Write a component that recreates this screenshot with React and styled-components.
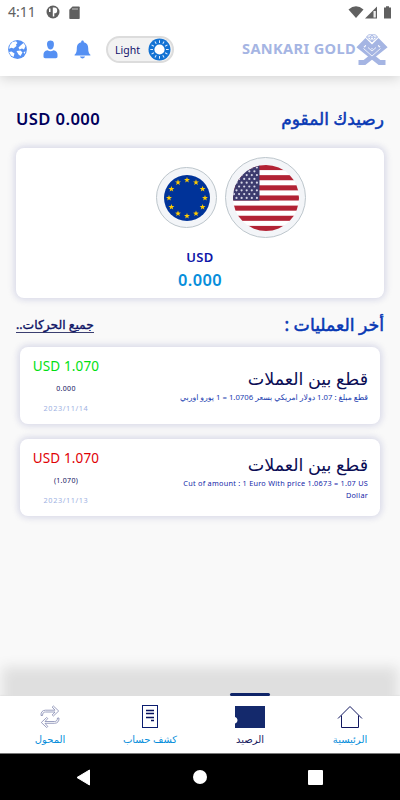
import React from 'react';
import styled, { createGlobalStyle } from 'styled-components';

const GlobalStyle = createGlobalStyle`
  * {
    box-sizing: border-box;
  }

  body {
    margin: 0;
    background: #f9f9f9;
    font-family: 'Noto Sans', 'DejaVu Sans', sans-serif;
  }

  svg {
    display: block;
    flex-shrink: 0;
  }
`;

const Screen = styled.div`
  display: flex;
  flex-direction: column;
  width: 400px;
  height: 800px;
  overflow: hidden;
  background: #f9f9f9;
`;

const Text = styled.span`
  display: block;
  color: ${({ $color }) => $color};
  font-size: ${({ $size }) => $size}px;
  font-weight: ${({ $weight }) => $weight || 400};
  line-height: ${({ $line }) => $line || 20}px;
  letter-spacing: ${({ $spacing }) => ($spacing ? `${$spacing}px` : 'normal')};
  -webkit-text-stroke: ${({ $stroke }) => $stroke || 0}px currentColor;
  white-space: nowrap;
`;

const Link = styled(Text)`
  border-bottom: 1px solid #3b3f70;
`;

const Top = styled.header`
  height: 76px;
  flex-shrink: 0;
  background: #fff;
  box-shadow: 0 2px 12px rgba(0, 0, 0, 0.16);
`;

const StatusBar = styled.div`
  display: flex;
  align-items: center;
  height: 24px;
  padding: 0 8px;
`;

const StatusIcons = styled.div`
  display: flex;
  align-items: center;
  gap: 9px;
  margin-left: 10px;
`;

const Signals = styled.div`
  display: flex;
  align-items: center;
  margin-left: auto;
`;

const Toolbar = styled.div`
  display: flex;
  align-items: center;
  height: 51px;
  padding: 0 12px 0 8px;
`;

const Actions = styled.div`
  display: flex;
  align-items: center;
  gap: 16px;
`;

const ThemeSwitch = styled.div`
  display: flex;
  align-items: center;
  justify-content: space-between;
  width: 68px;
  height: 27px;
  margin-left: 15px;
  padding: 0 1px 0 7px;
  border: 2px solid #dcdcdc;
  border-radius: 14px;
  background: #f2f2f2;
`;

const Brand = styled.div`
  display: flex;
  align-items: center;
  margin-left: auto;
`;

const BrandName = styled(Text)`
  padding-bottom: 3px;
`;

const Content = styled.main`
  flex: 1;
  padding: 32px 16px 0;
`;

const Heading = styled.div`
  display: flex;
  align-items: center;
  justify-content: space-between;
  height: ${({ $height }) => $height}px;
  padding-top: ${({ $top }) => $top || 0}px;
`;

const BalanceCard = styled.section`
  display: flex;
  flex-direction: column;
  align-items: center;
  height: 150px;
  margin-top: 18px;
  padding-top: 9px;
  border-radius: 8px;
  background: #fff;
  box-shadow: 0 0 6px 2px rgba(198, 200, 222, 0.65);
`;

const Currencies = styled.div`
  display: flex;
  align-items: center;
  gap: 8px;
  margin-left: 62px;
  margin-bottom: 9px;
`;

const CurrencyRing = styled.div`
  display: flex;
  align-items: center;
  justify-content: center;
  width: ${({ $size }) => $size}px;
  height: ${({ $size }) => $size}px;
  border: 1px solid #bdc6cc;
  border-radius: 50%;
  background: #f3f5f8;
`;

const OperationCard = styled.article`
  display: flex;
  justify-content: space-between;
  height: 77px;
  margin: 0 4px 15px;
  padding: 0 12px;
  border-radius: 8px;
  background: #fff;
  box-shadow: 0 0 6px 2px rgba(198, 200, 222, 0.65);
`;

const Amounts = styled.div`
  display: flex;
  flex-direction: column;
  align-items: center;
  width: 68px;
  padding-top: 9px;
`;

const Details = styled.div`
  display: flex;
  flex-direction: column;
  align-items: flex-end;
  padding-top: ${({ $top }) => $top}px;
`;

const Navigation = styled.nav`
  display: grid;
  grid-template-columns: repeat(4, 1fr);
  height: 57px;
  flex-shrink: 0;
  background: #fff;
  box-shadow: 0 -31px 12px -2px #dfdfdf, 0 0 2px rgba(0, 0, 0, 0.2);
`;

const Tab = styled.div`
  position: relative;
  display: flex;
  flex-direction: column;
  align-items: center;
  padding-top: 8px;
`;

const ActiveBar = styled.div`
  position: absolute;
  top: -3px;
  left: 30px;
  width: 40px;
  height: 3px;
  border-radius: 2px;
  background: #0e2468;
`;

const TabIcon = styled.div`
  display: flex;
  align-items: center;
  height: 26px;
`;

const SystemBar = styled.div`
  display: flex;
  align-items: center;
  justify-content: space-between;
  height: 47px;
  flex-shrink: 0;
  padding: 0 77px 0 76px;
  border-top: 1px solid #777;
  background: #000;
`;

const blue = '#5590f3';

const GlobeIcon = () => (
  <svg width="19" height="19" viewBox="0 0 19 19">
    <circle cx="9.5" cy="9.5" r="9.4" fill={blue} />
    <path d="M4.5 2 8 1.3 9.5 3 8 4.5 8.5 6 5.5 8.5 3.5 7.8 1 8.8 2 5zM12.5 5.5l3-2.5 2 3-1.5 3.5-2-1-2.5 1-1-2zM1 12l2.5-.5 3 2L5.5 17 3 15.5zM8.5 11l4-.5 2 2-2 3.5-2-1.5zM15.5 12l2-.5-1 2.5z" fill="#fff" />
  </svg>
);

const PersonIcon = () => (
  <svg width="15" height="19" viewBox="0 0 15 19">
    <path d="M7.5.5C4 .5 3.8 3.5 4.2 5.7 4.6 8 5.7 9.4 7.5 9.4s2.9-1.4 3.3-3.7c.4-2.2.2-5.2-3.3-5.2zM.5 14.5c0-2.2 1.3-3.7 4-4.3 2 1.3 4 1.3 6 0 2.7.6 4 2.1 4 4.3v2c0 1-.7 1.7-1.7 1.7H2.2c-1 0-1.7-.7-1.7-1.7z" fill={blue} />
  </svg>
);

const BellIcon = () => (
  <svg width="17" height="19" viewBox="0 0 17 19">
    <path d="M7.2 1.6C7.2 0 9.8 0 9.8 1.6v.7c3 .7 4.4 2.8 4.4 5.7 0 4 .6 5.4 2.2 6.7v.8H.6v-.8C2.2 13.4 2.8 12 2.8 8c0-2.9 1.4-5 4.4-5.7zM6 16.6h5c-.3 2.4-4.7 2.4-5 0z" fill={blue} />
  </svg>
);

const SunIcon = () => (
  <svg width="23" height="23" viewBox="0 0 23 23">
    <circle cx="11.5" cy="11.5" r="11" fill="#1272d3" />
    <circle cx="11.5" cy="11.5" r="5.1" fill="#fff" />
    {Array.from({ length: 12 }, (_, i) => (
      <path key={i} d="M11.5 5V2.3" stroke="#e3efff" strokeWidth="1" transform={`rotate(${i * 30} 11.5 11.5)`} />
    ))}
  </svg>
);

const BrandLogo = () => (
  <svg width="32" height="32" viewBox="0 0 32 32" fill="none">
    <g stroke="#a5b5e3" strokeWidth="4.8">
      <path d="M16 14 9.5 7.5 4 13 23.5 28.5H29.5" />
      <path d="M16 14 22.5 7.5 28 13 8.5 28.5H2.5" />
    </g>
    <path d="m16 22-8-7 2.500-4 5.500 4.500 5.500-4.500 2.500 4z" fill="#a5b5e3" />
    <path d="M7.500 14.500 16 22l8.500-7.500M12 13.500l4 3.500 4-3.500" stroke="#fff" strokeWidth=".8" />
    <path d="M12.500.8h7l2 2.400L16 8l-5.500-4.800zM10.500 3.200h11M14 3.200l2 4.500 2-4.500L16 1z" stroke="#a5b5e3" strokeWidth=".9" fill="#fff" />
  </svg>
);

const star = (cx, cy, r) =>
  Array.from({ length: 10 }, (_, i) => {
    const angle = (i * Math.PI) / 5 - Math.PI / 2;
    const radius = i % 2 ? r * 0.4 : r;
    return `${cx + radius * Math.cos(angle)},${cy + radius * Math.sin(angle)}`;
  }).join(' ');

const EuroFlag = () => (
  <svg width="46" height="46" viewBox="0 0 46 46">
    <circle cx="23" cy="23" r="23" fill="#003399" />
    {Array.from({ length: 12 }, (_, i) => {
      const angle = (i * Math.PI) / 6;
      return <polygon key={i} points={star(23 + 18 * Math.sin(angle), 23 - 18 * Math.cos(angle), 3.1)} fill="#ffcc00" />;
    })}
  </svg>
);

const UsaFlag = () => (
  <svg width="66" height="66" viewBox="0 0 66 66">
    <clipPath id="usa">
      <circle cx="33" cy="33" r="33" />
    </clipPath>
    <g clipPath="url(#usa)">
      <rect width="66" height="66" fill="#fff" />
      {Array.from({ length: 7 }, (_, i) => (
        <rect key={i} y={i * 10.15} width="66" height="5.08" fill="#b22234" />
      ))}
      <rect width="26.5" height="35.5" fill="#3c3b6e" />
      {Array.from({ length: 9 }, (_, row) =>
        Array.from({ length: 5 }, (_, col) => (
          <circle key={`${row}-${col}`} cx={(row % 2 ? 1 : 3.5) + col * 5.1} cy={2.5 + row * 3.8} r="1.1" fill="#d5d5e6" />
        ))
      )}
    </g>
  </svg>
);

const TransferIcon = () => (
  <svg width="20" height="24" viewBox="0 0 20 24" fill="none" stroke="#8288b0" strokeWidth=".8">
    <path d="M1 10.5C.7 7.3 2.5 5.2 5.5 5.2H15L12.2 2l1.2-1L18.7 6l-5.3 5-1.2-1L15 7H5.5C3.5 7 2.7 8 2.5 10.5zM19 13c.3 3.2-1.5 5.3-4.5 5.3H5l2.8 3.2-1.2 1L1.3 17.5l5.3-5 1.2 1L5 16.5h9.5c2 0 2.8-1 3-3.5z" />
  </svg>
);

const StatementIcon = () => (
  <svg width="16" height="24" viewBox="0 0 16 24">
    <rect x=".5" y=".5" width="15" height="22" fill="#fff" stroke="#0b1d70" strokeWidth="1" />
    <path d="M4 5.5h8M4 8.5h8M4 12.5h8M9 15.5h3" stroke="#07115e" strokeWidth="1.3" />
  </svg>
);

const WalletIcon = () => (
  <svg width="30" height="22" viewBox="0 0 30 22">
    <path d="M0 0h30v22H0v-4.5c3.3-1 3.3-5.500 0-6.500z" fill="#14296c" />
  </svg>
);

const HomeIcon = () => (
  <svg width="26" height="24" viewBox="0 0 26 24" fill="none" stroke="#11175f" strokeWidth="1">
    <path d="M1 13.5 13 1.5l12 12M4.500 10.500v12h17v-12" />
  </svg>
);

const tabs = [
  { label: 'المحول', icon: TransferIcon },
  { label: 'كشف حساب', icon: StatementIcon },
  { label: 'الرصيد', icon: WalletIcon, active: true },
  { label: 'الرئيسية', icon: HomeIcon },
];

const Header = () => (
  <Top>
    <StatusBar>
      <Text $size={14} $line={22} $color="#606060">4:11</Text>
      <StatusIcons>
        <svg width="14" height="14" viewBox="0 0 14 14">
          <circle cx="7" cy="7" r="6.5" fill="#606060" />
          <path d="M6.8 2.5h1.5a2.8 2.8 0 0 1 0 5.8v3.2H6.8zM3 3.5h1.5v3.5H3z" fill="#fff" />
        </svg>
        <svg width="11" height="13" viewBox="0 0 11 13">
          <path d="M3.5.5H10q.7 0 .7.7v11q0 .7-.7.7H1q-.7 0-.7-.7V3.7z" fill="#606060" />
          <path d="M4 2v2M6 2v2M8 2v2" stroke="#ddd" strokeWidth=".8" />
        </svg>
      </StatusIcons>
      <Signals>
        <svg width="44" height="14" viewBox="0 0 44 14">
          <path d="M.5 4.5Q8-2 15.5 4.5L8 13z" fill="#606060" />
          <path d="M17 13.5 29 1.500v12z" fill="#606060" />
          <path d="M25.5 6h2.3v6.500h-2.300z" fill="#eee" />
          <path d="M36 2.5h2V1.300h3v1.200h2v11h-7z" fill="#606060" />
        </svg>
      </Signals>
    </StatusBar>
    <Toolbar>
      <Actions>
        <GlobeIcon />
        <PersonIcon />
        <BellIcon />
      </Actions>
      <ThemeSwitch>
        <Text $size={10.5} $line={22} $color="#10106b">Light</Text>
        <SunIcon />
      </ThemeSwitch>
      <Brand>
        <BrandName $size={14.6} $weight={700} $line={16} $spacing={0.35} $color="#a5b5e3">SANKARI GOLD</BrandName>
        <BrandLogo />
      </Brand>
    </Toolbar>
  </Top>
);

const App = () => (
  <>
    <GlobalStyle />
    <Screen>
      <Header />
      <Content>
        <Heading $height={22}>
          <Text $size={16.6} $weight={600} $spacing={0.4} $color="#00005c">USD 0.000</Text>
          <Text dir="rtl" $size={17} $stroke={0.5} $color="#0838b4">رصيدك المقوم</Text>
        </Heading>
        <BalanceCard>
          <Currencies>
            <CurrencyRing $size={61}><EuroFlag /></CurrencyRing>
            <CurrencyRing $size={81}><UsaFlag /></CurrencyRing>
          </Currencies>
          <Text $size={13} $weight={600} $spacing={0.4} $color="#0d16a8">USD</Text>
          <Text $size={16.4} $weight={600} $line={26} $spacing={0.4} $color="#078edb">0.000</Text>
        </BalanceCard>
        <Heading $height={49} $top={5}>
          <Link dir="rtl" $size={12.3} $line={14} $stroke={0.35} $color="#0d1264">جميع الحركات..</Link>
          <Text dir="rtl" $size={17.3} $stroke={0.5} $color="#0838b4">أخر العمليات :</Text>
        </Heading>
        <OperationCard>
          <Amounts>
            <Text $size={13.5} $spacing={0.15} $color="#00df12">USD 1.070</Text>
            <Text $size={7} $line={26} $spacing={0.3} $color="#10105c">0.000</Text>
            <Text $size={7.3} $line={12} $spacing={0.6} $color="#9eb0e2">2023/11/14</Text>
          </Amounts>
          <Details $top={21}>
            <Text dir="rtl" $size={17.5} $color="#0b0d55">قطع بين العملات</Text>
            <Text dir="rtl" $size={7.75} $line={19} $color="#1b3eb0">قطع مبلغ : 1.07 دولار امريكي بسعر 1.0706 = 1 يورو اوربي</Text>
          </Details>
        </OperationCard>
        <OperationCard>
          <Amounts>
            <Text $size={13.5} $spacing={0.15} $color="#e00005">USD 1.070</Text>
            <Text $size={7} $line={26} $spacing={0.3} $color="#10105c">(1.070)</Text>
            <Text $size={7.3} $line={12} $spacing={0.6} $color="#9eb0e2">2023/11/13</Text>
          </Amounts>
          <Details $top={15}>
            <Text dir="rtl" $size={17.5} $color="#0b0d55">قطع بين العملات</Text>
            <Text $size={7.3} $line={19} $spacing={0.25} $color="#1426a8">Cut of amount : 1 Euro With price 1.0673 = 1.07 US</Text>
            <Text $size={7.3} $line={5} $spacing={0.25} $color="#1426a8">Dollar</Text>
          </Details>
        </OperationCard>
      </Content>
      <Navigation>
        {tabs.map(({ label, icon: Icon, active }) => (
          <Tab key={label}>
            {active && <ActiveBar />}
            <TabIcon><Icon /></TabIcon>
            <Text dir="rtl" $size={10} $line={18} $color={active ? '#17205f' : '#078edb'}>{label}</Text>
          </Tab>
        ))}
      </Navigation>
      <SystemBar>
        <svg width="15" height="17" viewBox="0 0 15 17"><path d="M1 8.5 13.5 1v15z" fill="#fff" stroke="#fff" strokeLinejoin="round" /></svg>
        <svg width="14" height="14" viewBox="0 0 14 14"><circle cx="7" cy="7" r="7" fill="#fff" /></svg>
        <svg width="15" height="15" viewBox="0 0 15 15"><rect width="15" height="15" rx="1" fill="#fff" /></svg>
      </SystemBar>
    </Screen>
  </>
);

export default App;
